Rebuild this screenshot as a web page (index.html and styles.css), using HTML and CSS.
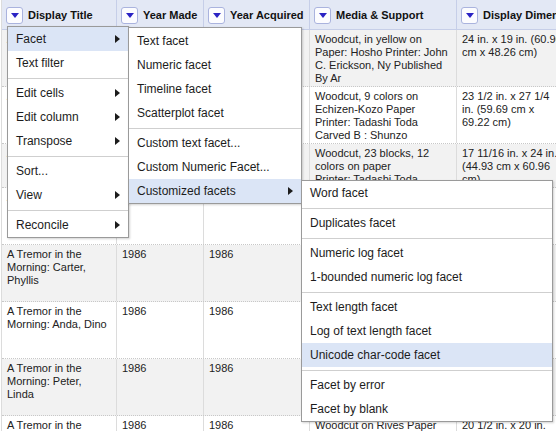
FILE: index.html
```html
<!DOCTYPE html>
<html>
<head>
<meta charset="utf-8">
<link rel="stylesheet" href="styles.css">
</head>
<body>
<div class="grid">
  <div class="row head">
    <div class="cell"><span class="dd"></span><span class="hl">Display Title</span></div>
    <div class="cell"><span class="dd"></span><span class="hl">Year Made</span></div>
    <div class="cell"><span class="dd"></span><span class="hl">Year Acquired</span></div>
    <div class="cell"><span class="dd"></span><span class="hl">Media &amp; Support</span></div>
    <div class="cell"><span class="dd"></span><span class="hl">Display Dimensions</span></div>
  </div>
  <div class="row odd">
    <div class="cell">A Tremor in the Morning: Ahn, Jon</div>
    <div class="cell">1986</div>
    <div class="cell">1986</div>
    <div class="cell">Woodcut, in yellow on Paper: Hosho Printer: John C. Erickson, Ny Published By Ar</div>
    <div class="cell">24 in. x 19 in. (60.96 cm x 48.26 cm)</div>
  </div>
  <div class="row">
    <div class="cell">A Tremor in the Morning: Bell, Mary</div>
    <div class="cell">1986</div>
    <div class="cell">1986</div>
    <div class="cell">Woodcut, 9 colors on Echizen-Kozo Paper Printer: Tadashi Toda Carved B : Shunzo</div>
    <div class="cell">23 1/2 in. x 27 1/4 in. (59.69 cm x 69.22 cm)</div>
  </div>
  <div class="row odd">
    <div class="cell">A Tremor in the Morning: Bryant</div>
    <div class="cell">1986</div>
    <div class="cell">1986</div>
    <div class="cell">Woodcut, 23 blocks, 12 colors on paper<br>Printer: Tadashi Toda</div>
    <div class="cell">17 11/16 in. x 24 in. (44.93 cm x 60.96 cm)</div>
  </div>
  <div class="row">
    <div class="cell">A Tremor in the Morning: Brown, Ann</div>
    <div class="cell">1986</div>
    <div class="cell">1986</div>
    <div class="cell">Woodcut on Rives Paper<br>Printer: Tadashi Toda<br>Carved B : Shunzo<br>Published By Ar</div>
    <div class="cell">20 1/2 in. x 20 in. (52.07 cm x 50.8 cm)</div>
  </div>
  <div class="row odd">
    <div class="cell">A Tremor in the Morning: Carter, Phyllis</div>
    <div class="cell">1986</div>
    <div class="cell">1986</div>
    <div class="cell">Woodcut on Rives Paper<br>Printer: Tadashi Toda<br>Carved B : Shunzo<br>Published By Ar</div>
    <div class="cell">20 1/2 in. x 20 in. (52.07 cm x 50.8 cm)</div>
  </div>
  <div class="row">
    <div class="cell">A Tremor in the Morning: Anda, Dino</div>
    <div class="cell">1986</div>
    <div class="cell">1986</div>
    <div class="cell">Woodcut on Rives Paper<br>Printer: Tadashi Toda<br>Carved B : Shunzo<br>Published By Ar</div>
    <div class="cell">20 1/2 in. x 20 in. (52.07 cm x 50.8 cm)</div>
  </div>
  <div class="row odd">
    <div class="cell">A Tremor in the Morning: Peter, Linda</div>
    <div class="cell">1986</div>
    <div class="cell">1986</div>
    <div class="cell">Woodcut on Rives Paper<br>Printer: Tadashi Toda<br>Carved B : Shunzo<br>Published By Ar</div>
    <div class="cell">20 1/2 in. x 20 in. (52.07 cm x 50.8 cm)</div>
  </div>
  <div class="row">
    <div class="cell">A Tremor in the Morning: Evans, Ruth</div>
    <div class="cell">1986</div>
    <div class="cell">1986</div>
    <div class="cell">Woodcut on Rives Paper Printer: Tadashi Toda</div>
    <div class="cell">20 1/2 in. x 20 in. (52.07 cm x 50.8 cm)</div>
  </div>
</div>

<div class="menu m1">
  <div class="item hi">Facet<span class="arr"></span></div>
  <div class="item">Text filter</div>
  <div class="sep"></div>
  <div class="item">Edit cells<span class="arr"></span></div>
  <div class="item">Edit column<span class="arr"></span></div>
  <div class="item">Transpose<span class="arr"></span></div>
  <div class="sep"></div>
  <div class="item">Sort...</div>
  <div class="item">View<span class="arr"></span></div>
  <div class="sep"></div>
  <div class="item">Reconcile<span class="arr"></span></div>
</div>

<div class="menu m2">
  <div class="item">Text facet</div>
  <div class="item">Numeric facet</div>
  <div class="item">Timeline facet</div>
  <div class="item">Scatterplot facet</div>
  <div class="sep"></div>
  <div class="item">Custom text facet...</div>
  <div class="item">Custom Numeric Facet...</div>
  <div class="item hi">Customized facets<span class="arr"></span></div>
</div>

<div class="menu m3">
  <div class="item">Word facet</div>
  <div class="sep"></div>
  <div class="item">Duplicates facet</div>
  <div class="sep"></div>
  <div class="item">Numeric log facet</div>
  <div class="item">1-bounded numeric log facet</div>
  <div class="sep"></div>
  <div class="item">Text length facet</div>
  <div class="item">Log of text length facet</div>
  <div class="item hi">Unicode char-code facet</div>
  <div class="sep"></div>
  <div class="item">Facet by error</div>
  <div class="item">Facet by blank</div>
</div>
</body>
</html>
```
FILE: styles.css
```css
html, body {
  margin: 0;
  padding: 0;
}
body {
  width: 556px;
  height: 431px;
  overflow: hidden;
  position: relative;
  background: #fff;
  font-family: "Liberation Sans", Arial, Helvetica, sans-serif;
  color: #222;
}
.grid {
  margin-left: 1px;
  border-left: 1px solid #dcdcdc;
  width: 700px;
}
.row {
  display: grid;
  grid-template-columns: 115px 87px 106px 147px 112px;
  border-bottom: 1px dotted #c8c8c8;
  font-size: 11px;
  line-height: 13px;
}
.row.odd {
  background: #f2f2f2;
}
.cell {
  padding: 3px 5px 1px 5px;
  border-right: 1px solid #dcdcdc;
  overflow: hidden;
}
.row.head {
  background: #e3e8f5;
  height: 29px;
  border-bottom: 1px solid #c6cee8;
  font-weight: bold;
  color: #111;
}
.row.head .cell {
  display: flex;
  align-items: center;
  padding: 0 0 0 4px;
  border-right: 1px solid #c6cee8;
  white-space: nowrap;
}
.dd {
  flex: none;
  width: 15px;
  height: 15px;
  border: 1px solid #aab3de;
  border-radius: 3px;
  background: #fcfcff;
  display: flex;
  align-items: center;
  justify-content: center;
  margin-right: 5px;
  margin-top: 1px;
}
.dd::after {
  content: "";
  border-left: 4px solid transparent;
  border-right: 4px solid transparent;
  border-top: 5px solid #2a22c4;
  margin-top: 1px;
}
.hl {
  margin-top: 2px;
}
.menu {
  position: absolute;
  background: #fff;
  border: 1px solid #9a9a9a;
  box-shadow: 1px 1px 2px rgba(0, 0, 0, 0.18);
  font-size: 12px;
  color: #1c1c1c;
}
.m1 {
  left: 7px;
  top: 26px;
  width: 120px;
}
.m2 {
  left: 128px;
  top: 27px;
  width: 172px;
  padding-top: 1px;
}
.m3 {
  left: 301px;
  top: 180px;
  width: 250px;
}
.item {
  height: 24px;
  line-height: 24px;
  padding-left: 8px;
  display: flex;
  align-items: center;
  white-space: nowrap;
}
.item.hi {
  background: #dbe5f6;
}
.arr {
  margin-left: auto;
  margin-right: 8px;
  width: 0;
  height: 0;
  border-left: 5px solid #1c1c1c;
  border-top: 4px solid transparent;
  border-bottom: 4px solid transparent;
}
.sep {
  height: 1px;
  background: #cfcfcf;
  margin: 3px 0 2px 0;
}
```
